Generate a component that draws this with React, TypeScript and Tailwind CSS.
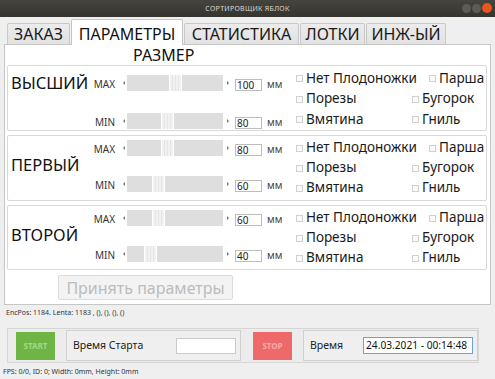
import React from 'react';

const tabs = [
  { label: 'ЗАКАЗ', w: 'w-[63px]' },
  { label: 'ПАРАМЕТРЫ', w: 'w-[112px]', active: true },
  { label: 'СТАТИСТИКА', w: 'w-[115px]' },
  { label: 'ЛОТКИ', w: 'w-[65px]' },
  { label: 'ИНЖ-ЫЙ', w: 'w-[80px]' },
];

const groups = [
  {
    name: 'ВЫСШИЙ',
    max: 100,
    min: 80,
    h: 'h-[66px]',
    labelCls: 'pt-[6px]',
    slidersCls: 'pt-[9px] gap-[22px]',
    cbRow: 'h-[21px]',
  },
  {
    name: 'ПЕРВЫЙ',
    max: 80,
    min: 60,
    h: 'h-[66px]',
    labelCls: 'justify-center pb-[6px]',
    slidersCls: 'pt-[4px] gap-[20px]',
    cbRow: 'h-[20px]',
  },
  {
    name: 'ВТОРОЙ',
    max: 60,
    min: 40,
    h: 'h-[65px]',
    labelCls: 'justify-center pb-[5px]',
    slidersCls: 'pt-[4px] gap-[20px]',
    cbRow: 'h-[20px]',
  },
];

const Slider: React.FC<{ value: number }> = ({ value }) => (
  <div className="relative w-[110px] h-[16px]">
    <span className="absolute left-[2px] top-[6px] w-0 h-0 border-y-[2px] border-y-transparent border-r-[2px] border-r-[#777]" />
    <div className="absolute left-[6px] right-[8px] top-0 bottom-0 bg-[#dedede]" />
    <div
      className="absolute top-0 bottom-0 w-[13px] bg-[#f1f1f1] border-x border-x-white flex justify-center gap-[2px]"
      style={{ left: 6 + Math.round(value * 0.42) }}
    >
      <span className="w-px h-full bg-[#e6e6e6]" />
      <span className="w-px h-full bg-[#e6e6e6]" />
      <span className="w-px h-full bg-[#e6e6e6]" />
    </div>
    <span className="absolute right-[2px] top-[6px] w-0 h-0 border-y-[2px] border-y-transparent border-l-[2px] border-l-[#777]" />
  </div>
);

const SliderRow: React.FC<{ label: string; value: number }> = ({ label, value }) => (
  <div className="flex items-start h-[16px]">
    <span className="w-[27px] text-right text-[10px] text-[#333] leading-[16px] mt-px">{label}</span>
    <div className="ml-[6px]">
      <Slider value={value} />
    </div>
    <div className="ml-[4px] mt-[4px] w-[27px] h-[12px] bg-white border border-[#bdbdbd] text-[10px] leading-[10px] pl-[1px] text-[#222]">
      {value}
    </div>
    <span className="ml-[5px] w-[16px] text-[10px] text-[#444] leading-[16px] mt-[1px]">мм</span>
  </div>
);

const Check: React.FC<{ label: string; w?: string }> = ({ label, w }) => (
  <div className={`flex items-center gap-[3px] ${w ?? ''}`}>
    <span className="w-[7px] h-[7px] border border-[#d0d0d0] bg-[#fafafa]" />
    <span className="text-[13.5px] text-[#1a1a1a] leading-none whitespace-nowrap">{label}</span>
  </div>
);

const Group: React.FC<(typeof groups)[number]> = (g) => (
  <div className={`flex border border-[#d9d9d9] rounded-[2px] bg-white ${g.h}`}>
    <div className={`w-[80px] pl-[3px] flex flex-col ${g.labelCls}`}>
      <span className="text-[16.5px] text-[#111] leading-[22px]">{g.name}</span>
    </div>
    <div className={`flex flex-col ${g.slidersCls}`}>
      <SliderRow label="MAX" value={g.max} />
      <SliderRow label="MIN" value={g.min} />
    </div>
    <div className="ml-[13px] pt-[2px] flex flex-col">
      <div className={`flex items-center ${g.cbRow}`}>
        <Check label="Нет Плодоножки" w="w-[133px]" />
        <Check label="Парша" />
      </div>
      <div className={`flex items-center ${g.cbRow}`}>
        <Check label="Порезы" w="w-[116px]" />
        <Check label="Бугорок" />
      </div>
      <div className={`flex items-center ${g.cbRow}`}>
        <Check label="Вмятина" w="w-[116px]" />
        <Check label="Гниль" />
      </div>
    </div>
  </div>
);

export default function App() {
  return (
    <div className="w-[495px] h-[379px] overflow-hidden bg-[#efefef] flex flex-col font-['Noto_Sans',sans-serif]">
      {/* title bar */}
      <div className="relative h-[17px] bg-gradient-to-b from-[#45443f] to-[#35342f] flex items-center justify-center">
        <span className="text-[7px] tracking-[0.3px] text-[#dcd8cf] leading-none">СОРТИРОВЩИК ЯБЛОК</span>
        <div className="absolute right-[3px] top-[3px] flex gap-[1px] items-center">
          <span className="w-[9px] h-[9px] rounded-full bg-[#5c5b56]" />
          <span className="w-[9px] h-[9px] rounded-full bg-[#5c5b56]" />
          <span className="w-[10px] h-[10px] rounded-full bg-[#e9541f]" />
        </div>
      </div>

      {/* tabs */}
      <div className="h-[27px] pl-[7px] flex items-end gap-[1px]">
        {tabs.map((t) =>
          t.active ? (
            <div
              key={t.label}
              className={`${t.w} h-[26px] -mb-px relative z-10 bg-white border-x border-t border-[#c6c6c6] rounded-t-[2px] flex items-center justify-center text-[16px] text-[#111] leading-none pt-[3px] whitespace-nowrap`}
            >
              {t.label}
            </div>
          ) : (
            <div
              key={t.label}
              className={`${t.w} h-[21px] bg-gradient-to-b from-[#ececec] to-[#e2e2e2] border-x border-t border-[#c9c9c9] rounded-t-[2px] flex items-center justify-center text-[16px] text-[#1a1a1a] leading-none whitespace-nowrap`}
            >
              {t.label}
            </div>
          )
        )}
      </div>

      {/* panel */}
      <div className="ml-[4px] w-[487px] h-[261px] bg-white border border-[#c6c6c6] flex flex-col px-[2px]">
        <div className="h-[20px] pl-[126px] text-[16px] text-[#111] leading-[20px]">РАЗМЕР</div>
        <div className="flex flex-col gap-[4px] pr-px">
          {groups.map((g) => (
            <Group key={g.name} {...g} />
          ))}
        </div>
        <div className="mt-[5px] ml-[51px] w-[175px] h-[25px] bg-[#f3f3f3] border border-[#dcdcdc] rounded-[2px] flex items-center justify-center text-[16px] text-[#bcbcbc] leading-none">
          Принять параметры
        </div>
      </div>

      <div className="h-[15px] pl-[6px] text-[7px] text-[#333] leading-[15px]">
        EncPos: 1184. Lenta: 1183 , (), (), (), ()
      </div>

      {/* bottom bar */}
      <div className="mt-[8px] ml-[7px] w-[472px] h-[35px] border border-[#d6d6d6] bg-[#ececec] flex items-center pl-[8px]">
        <div className="w-[39px] h-[28px] bg-[#6eb545] flex items-center justify-center text-[8px] font-bold text-[#a4d886]">
          START
        </div>
        <div className="ml-[11px] w-[175px] h-[31px] border border-[#d0d0d0] bg-[#efefef] flex items-center pl-[6px]">
          <span className="text-[10.5px] text-[#222]">Время Старта</span>
          <div className="ml-auto mr-[4px] w-[60px] h-[16px] bg-white border border-[#cacaca]" />
        </div>
        <div className="ml-[12px] w-[39px] h-[28px] bg-[#ee6a6a] flex items-center justify-center text-[8px] font-bold text-[#f6a9a9]">
          STOP
        </div>
        <div className="ml-[11px] w-[175px] h-[31px] border border-[#d0d0d0] bg-[#efefef] flex items-center pl-[6px]">
          <span className="text-[10.5px] text-[#222]">Время</span>
          <div className="ml-auto mr-[4px] w-[110px] h-[17px] bg-white border border-[#6f9fd6] flex items-center pl-[2px] text-[10.2px] text-[#111] leading-none whitespace-nowrap">
            24.03.2021 - 00:14:48
          </div>
        </div>
      </div>

      <div className="mt-[3px] pl-[3px] text-[7px] text-[#333] leading-[12px]">
        FPS: 0/0, ID: 0; Width: 0mm, Height: 0mm
      </div>
    </div>
  );
}
